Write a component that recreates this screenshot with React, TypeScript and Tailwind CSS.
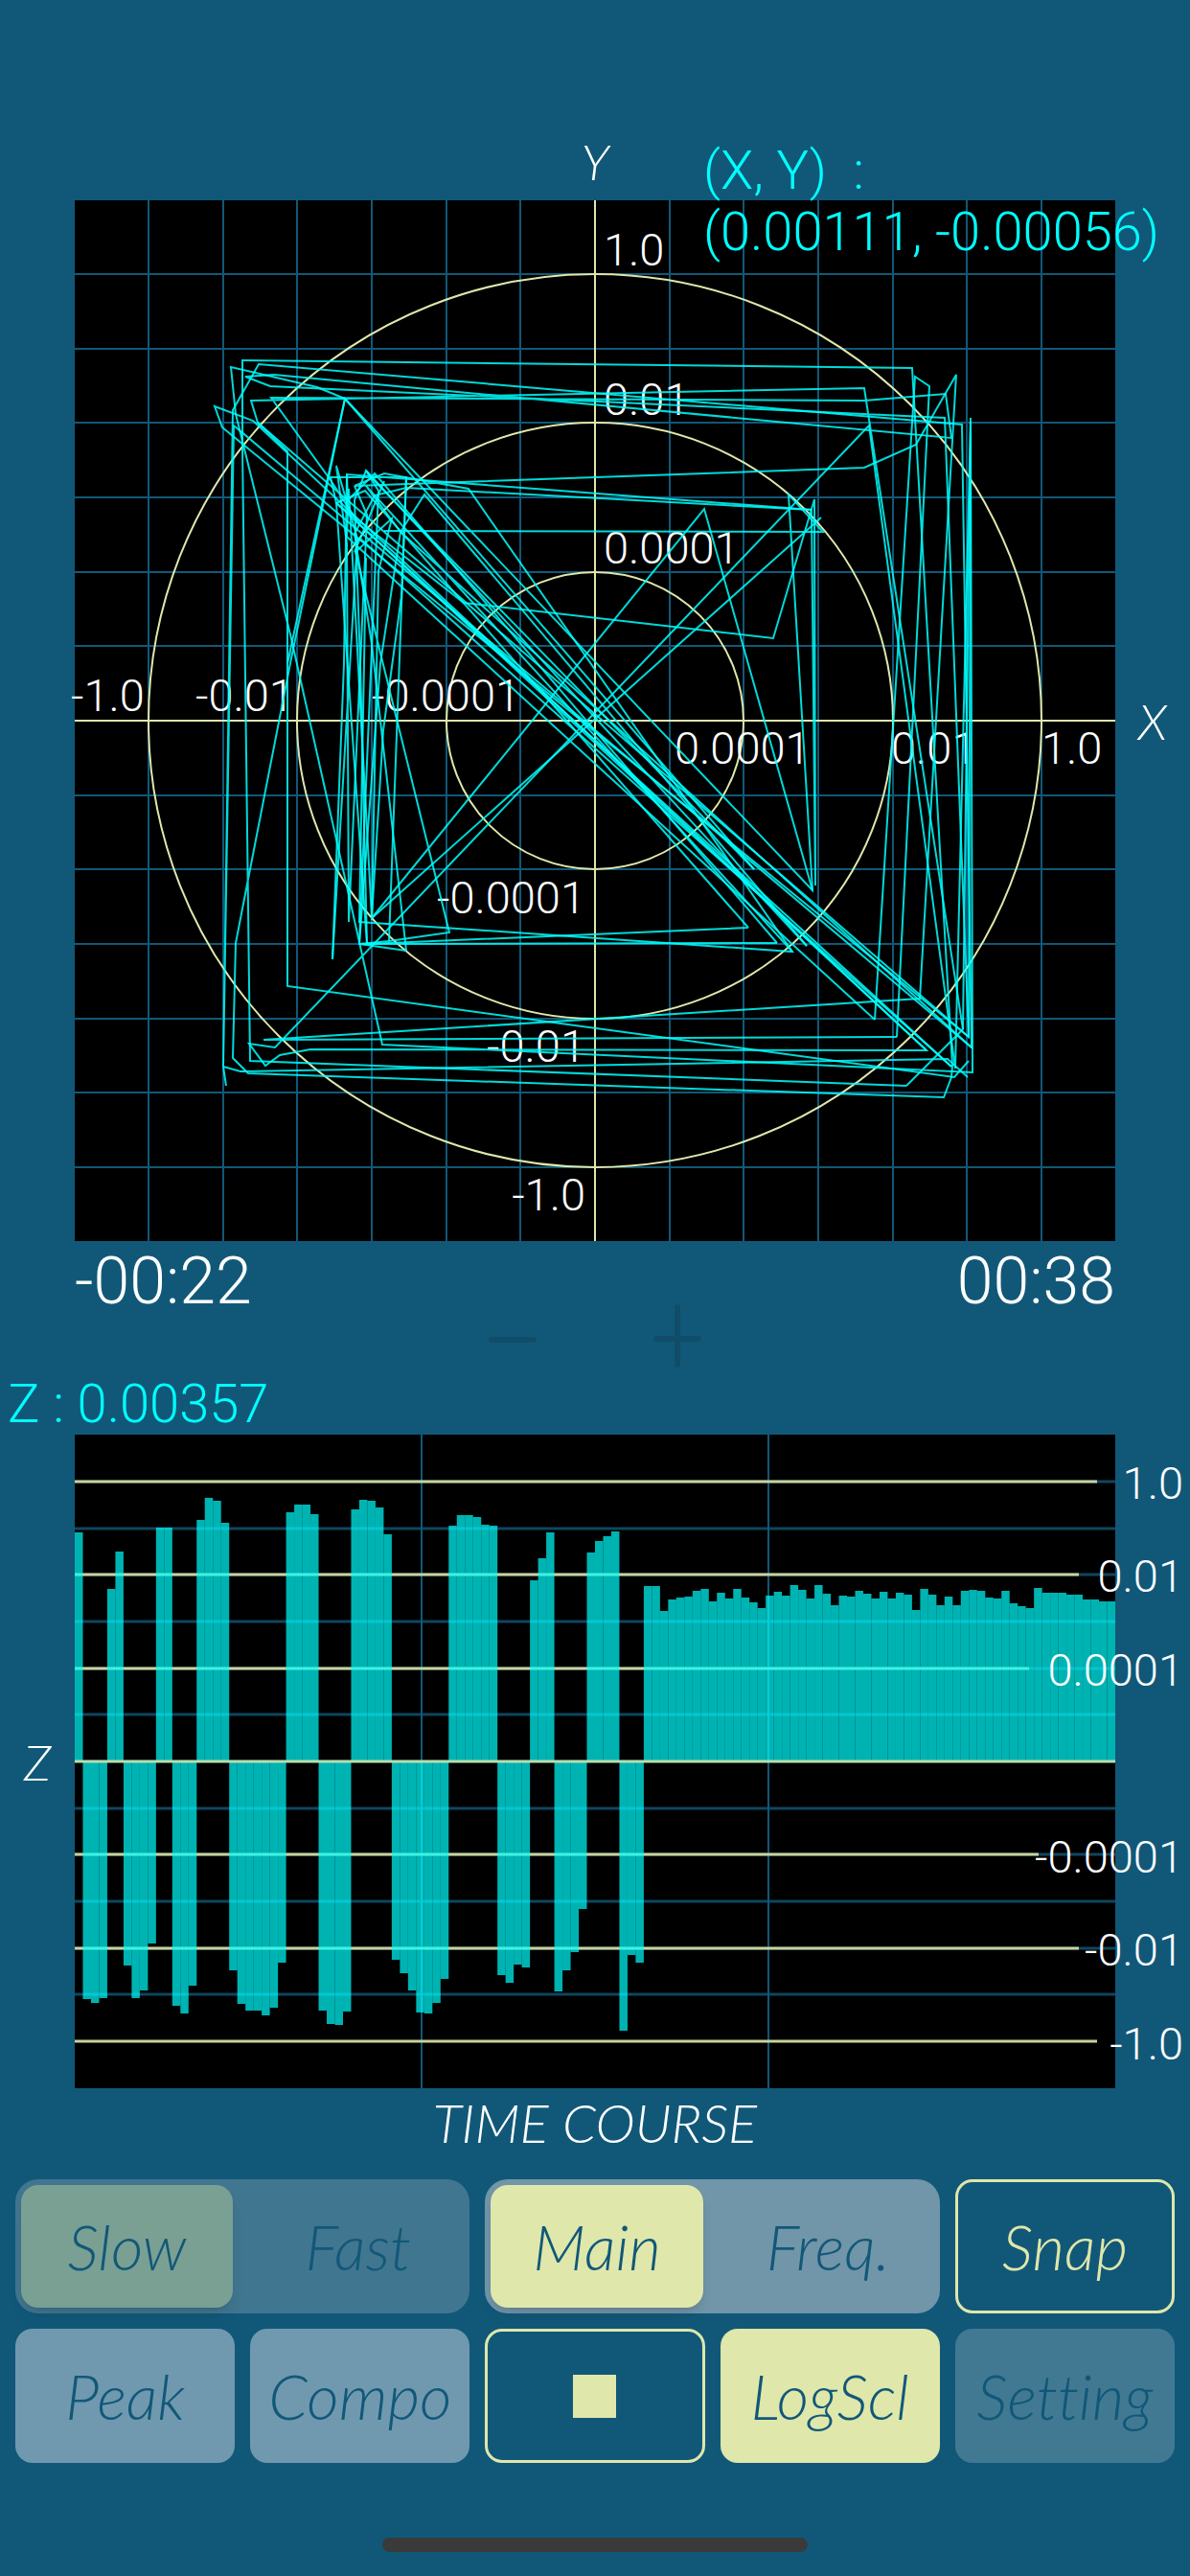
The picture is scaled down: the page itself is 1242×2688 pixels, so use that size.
import { useState } from "react";

const NUMERIC_FONT = "font-[Roboto,'Liberation_Sans',sans-serif] font-light";
const LABEL_FONT =
  "font-[Lato,'Open_Sans',sans-serif] font-light italic [font-variant-ligatures:none]";

// Decades drawn on every log axis, 155px apart on the scope and 97px on the time course
const RINGS = [155, 311, 466];
const GRID = [-6, -5, -4, -3, -2, -1, 1, 2, 3, 4, 5, 6].map((i) => Math.round(i * 77.65));

const SCOPE_LABELS: { text: string; x: number; y: number; end?: boolean }[] = [
  { text: "1.0", x: 9, y: -475 },
  { text: "0.01", x: 9, y: -319 },
  { text: "0.0001", x: 9, y: -164 },
  { text: "-1.0", x: -547, y: -10 },
  { text: "-0.01", x: -417, y: -10 },
  { text: "-0.0001", x: -233, y: -10 },
  { text: "0.0001", x: 83, y: 45 },
  { text: "0.01", x: 309, y: 45 },
  { text: "1.0", x: 466, y: 45 },
  { text: "-0.0001", x: -10, y: 201, end: true },
  { text: "-0.01", x: -10, y: 356, end: true },
  { text: "-1.0", x: -10, y: 511, end: true },
];

// Sampled (X, Y) positions, origin in the middle of the scope
const TRACES = [
  "325,381 -360,355 -368,-286 -368,-376 331,-368 373,360 372,372 364,393 -362,368 -378,352 -375,232 -318,-60 -261,-336 227,177 202,-236 238,-197 -220,-198",
  "-385,381 -388,361 -378,-324 -351,-372 383,-309 393,341 -377,-308 -388,361 -370,366 368,353 389,372",
  "384,322 281,-347 -359,-334 -352,-311 390,330 365,-316 -339,-349 -365,-359 -335,-361 372,-295 366,-341 281,-334 -338,-337 -276,-251 -246,-205 372,361",
  "-261,-336 -290,-348 -380,-369 -375,-320 -318,-90 -222,338 394,367 392,-312 376,363 286,-308 -334,341 -361,337 -344,360 -329,349 -297,343 346,344 -270,-227",
  "-197,240 -246,233 -215,230 -152,221 -250,-176 -212,-211 -226,-156 -233,206 114,-221 227,177",
  "-261,-336 -321,-60 -318,-72",
  "-352,-311 -321,-281 -321,277 375,372 390,355",
  "315,330 -346,333 339,290 377,-361 335,-288 281,-264 -251,-245 -220,-258 -132,-242 206,241 -246,210 -239,-170",
  "160,216 -238,233 -270,-227 -240,-240 160,216",
  "292,312 334,-359 349,-349 315,330",
  "292,312 -259,-192 -257,-242 -233,206 236,-212",
  "325,381 384,322 392,-316",
  "392,-300 390,330 -389,-306 -397,-328 -357,-313 346,344",
  "166,155 -261,-336",
  "190,232 -246,233 -226,-240 -239,-261 221,235",
  "-274,249 -248,-190 -270,-266 -259,-185 -257,210 -238,-215 -251,-245",
  "190,232 -230,-258 -258,-230 -259,-257 226,-220 230,172 229,-231 186,-86 -137,-123 -270,-227 -276,-254 -197,-254 -215,230",
  "-274,249 -262,-60 -259,-257",
  "221,235 -178,-236 -203,-197 -224,-60 -246,233",
  "226,-220 -197,-243 -230,-235 -251,-195 -233,-80 -197,240",
  "-197,-254 -202,-130 -221,10 -233,206",
  "-238,233 -245,-60 -251,-230 -239,-261 -230,-250 166,155",
  "372,361 -245,-190 -220,-250 -251,-176",
  "393,341 -203,-197 -239,-245 206,241",
];

// One value per time slot, pixels above (or below) the zero line
const BARS = [
  239, -248, -252, -247, 180, 219, -213, -247, -239, -190, 244, 244, -255, -263, -234, 252,
  275, 272, 249, -218, -253, -260, -260, -265, -257, -210, 260, 268, 268, 258, -260, -274,
  -275, -261, 263, 273, 272, 265, 237, -207, -221, -239, -262, -263, -252, -227, 246, 257,
  257, 255, 247, 246, -223, -231, -212, -215, 189, 212, 239, -240, -218, -199, -154, 218,
  230, 235, 240, -281, -202, -210, 183, 183, 157, 169, 171, 172, 178, 180, 167, 176,
  170, 180, 171, 166, 160, 173, 177, 173, 184, 179, 170, 184, 175, 163, 173, 172,
  178, 175, 170, 177, 170, 176, 174, 158, 180, 174, 163, 172, 163, 178, 179, 178,
  171, 170, 178, 165, 162, 160, 181, 176, 176, 176, 174, 174, 169, 169, 167, 167,
];
const BAR_WIDTH = 1086 / BARS.length;

const Z_TICKS = [
  { text: "1.0", line: -292, base: -274, stop: 1067 },
  { text: "0.01", line: -195, base: -177, stop: 1048 },
  { text: "0.0001", line: -97, base: -79, stop: 996 },
  { text: "-0.0001", line: 97, base: 116, stop: 1006 },
  { text: "-0.01", line: 195, base: 213, stop: 1048 },
  { text: "-1.0", line: 292, base: 311, stop: 1067 },
];

function Scope() {
  return (
    <svg viewBox="-543 -543 1086 1086" className="block min-w-0 flex-1 overflow-visible bg-black">
      <g stroke="#115878" strokeWidth="2">
        {GRID.map((p) => (
          <g key={p}>
            <line x1={p} x2={p} y1="-543" y2="543" />
            <line x1="-543" x2="543" y1={p} y2={p} />
          </g>
        ))}
      </g>
      <g stroke="#dfe7ab" strokeWidth="2" fill="none">
        <line x1="-543" x2="543" y1="0" y2="0" />
        <line x1="0" x2="0" y1="-543" y2="543" />
        {RINGS.map((r) => (
          <circle key={r} r={r} />
        ))}
      </g>
      <g fill="#fff" className={`text-[47px] ${NUMERIC_FONT}`}>
        {SCOPE_LABELS.map((l) => (
          <text key={`${l.x},${l.y}`} x={l.x} y={l.y} textAnchor={l.end ? "end" : "start"}>
            {l.text}
          </text>
        ))}
      </g>
      <g stroke="#00ffff" strokeWidth="2" strokeOpacity="0.85" fill="none">
        {TRACES.map((points, i) => (
          <polyline key={i} points={points} />
        ))}
      </g>
    </svg>
  );
}

function TimeCourse() {
  return (
    <svg viewBox="0 -341 1086 682" className="block min-w-0 flex-1 overflow-visible bg-black">
      <g stroke="#115878">
        {[-292, -243, -195, -146, -97, -49, 49, 97, 146, 195, 243].map((y) => (
          <line key={y} x1="0" x2="1086" y1={y} y2={y} strokeWidth="3" strokeOpacity="0.8" />
        ))}
        <line x1="362" x2="362" y1="-341" y2="341" strokeWidth="2" />
        <line x1="724" x2="724" y1="-341" y2="341" strokeWidth="2" />
      </g>
      <g stroke="#c9d29c" strokeWidth="3">
        {Z_TICKS.map((t) => (
          <line key={t.text} x1="0" x2={t.stop} y1={t.line} y2={t.line} />
        ))}
      </g>
      <g fill="#00ffff" fillOpacity="0.7">
        {BARS.map((v, i) => (
          <rect
            key={i}
            x={i * BAR_WIDTH}
            y={v > 0 ? -v : 0}
            width={BAR_WIDTH}
            height={Math.abs(v)}
          />
        ))}
      </g>
      <line x1="0" x2="1086" y1="0" y2="0" stroke="#b5dfb0" strokeWidth="3" />
      <g fill="#fff" textAnchor="end" className={`text-[47px] ${NUMERIC_FONT}`}>
        {Z_TICKS.map((t) => (
          <text key={t.text} x="1157" y={t.base}>
            {t.text}
          </text>
        ))}
      </g>
    </svg>
  );
}

interface SegmentedProps {
  name: string;
  options: string[];
  disabled?: boolean;
}

function Segmented({ name, options, disabled }: SegmentedProps) {
  const [value, setValue] = useState(options[0]);
  const track = disabled ? "bg-[#417690]" : "bg-[#7195a9]";
  const active = disabled ? "bg-[#7aa093]" : "bg-[#dfe7ab]";

  return (
    <fieldset
      disabled={disabled}
      aria-label={name}
      className={`col-span-2 flex h-[140px] gap-5 rounded-3xl p-1.5 ${track}`}
    >
      {options.map((option) => (
        <label
          key={option}
          className={`relative flex flex-1 items-center justify-center rounded-[18px] ${
            value === option ? `shadow-lg ${active}` : ""
          }`}
        >
          <input
            type="radio"
            name={name}
            className="sr-only"
            checked={value === option}
            onChange={() => setValue(option)}
          />
          {option}
        </label>
      ))}
    </fieldset>
  );
}

const BUTTON = "flex h-[140px] items-center justify-center rounded-[18px]";

export default function App() {
  const [peak, setPeak] = useState(false);
  const [compo, setCompo] = useState(false);
  const [logScale, setLogScale] = useState(true);
  const toggle = (on: boolean) => (on ? "bg-[#dfe7ab]" : "bg-[#7099af]");

  return (
    <main className="flex min-h-screen flex-col bg-[#115878] text-white">
      {/* XY scope */}
      <section className="relative pt-[136px]">
        <div className={`h-[73px] text-center text-[52px] leading-[64px] ${LABEL_FONT}`}>Y</div>
        <div className="flex items-center">
          <div className="w-[78px]" />
          <Scope />
          <div className={`w-[78px] text-center text-[52px] leading-[64px] ${LABEL_FONT}`}>X</div>
        </div>
        <output
          className={`absolute top-[146px] right-6 w-[484px] text-[56px] leading-[64px] whitespace-pre text-[#00ffff] ${NUMERIC_FONT}`}
        >
          {"(X, Y)  :\n(0.00111, -0.00056)"}
        </output>
      </section>

      {/* Time window and zoom */}
      <section className="flex h-[138px] items-start justify-between px-[78px]">
        <div className={`w-[200px] text-[68px] leading-[84px] ${NUMERIC_FONT}`}>-00:22</div>
        <div className="flex pt-[66px]">
          <button aria-label="Zoom out" disabled className="flex w-[172px] justify-center">
            <svg width="50" height="66" stroke="#104d69" strokeWidth="6" strokeLinecap="round">
              <line x1="3" x2="47" y1="37" y2="37" />
            </svg>
          </button>
          <button aria-label="Zoom in" disabled className="flex w-[172px] justify-center">
            <svg width="50" height="66" stroke="#104d69" strokeWidth="6" strokeLinecap="round">
              <path d="M3 36H47M25 3V63" fill="none" />
            </svg>
          </button>
        </div>
        <div className={`w-[200px] text-right text-[68px] leading-[84px] ${NUMERIC_FONT}`}>
          00:38
        </div>
      </section>

      {/* Z over time */}
      <section>
        <output
          className={`block px-2 text-[56px] leading-[64px] text-[#00ffff] ${NUMERIC_FONT}`}
        >
          Z : 0.00357
        </output>
        <div className="flex items-center">
          <div className={`w-[78px] text-center text-[52px] leading-[64px] ${LABEL_FONT}`}>Z</div>
          <TimeCourse />
          <div className="w-[78px]" />
        </div>
        <h2 className={`h-[95px] pt-1 text-center text-[56px] leading-[64px] ${LABEL_FONT}`}>
          TIME COURSE
        </h2>
      </section>

      {/* Controls */}
      <section
        className={`grid grid-cols-5 gap-4 px-4 text-[65px] leading-[72px] text-[#115878] ${LABEL_FONT}`}
      >
        <Segmented name="Speed" options={["Slow", "Fast"]} disabled />
        <Segmented name="View" options={["Main", "Freq."]} />
        <button className={`${BUTTON} border-3 border-[#dfe7ab] text-[#dfe7ab]`}>Snap</button>
        <button
          aria-pressed={peak}
          onClick={() => setPeak(!peak)}
          className={`${BUTTON} ${toggle(peak)}`}
        >
          Peak
        </button>
        <button
          aria-pressed={compo}
          onClick={() => setCompo(!compo)}
          className={`${BUTTON} ${toggle(compo)}`}
        >
          Compo
        </button>
        <button aria-label="Stop" className={`${BUTTON} border-3 border-[#dfe7ab]`}>
          <span className="size-[45px] bg-[#dfe7ab]" />
        </button>
        <button
          aria-pressed={logScale}
          onClick={() => setLogScale(!logScale)}
          className={`${BUTTON} ${toggle(logScale)}`}
        >
          LogScl
        </button>
        <button disabled className={`${BUTTON} bg-[#417993]`}>
          Setting
        </button>
      </section>

      {/* Home indicator */}
      <div className="mx-auto mt-[78px] mb-6 h-[15px] w-[444px] rounded-full bg-[#3a3a3a]" />
    </main>
  );
}
